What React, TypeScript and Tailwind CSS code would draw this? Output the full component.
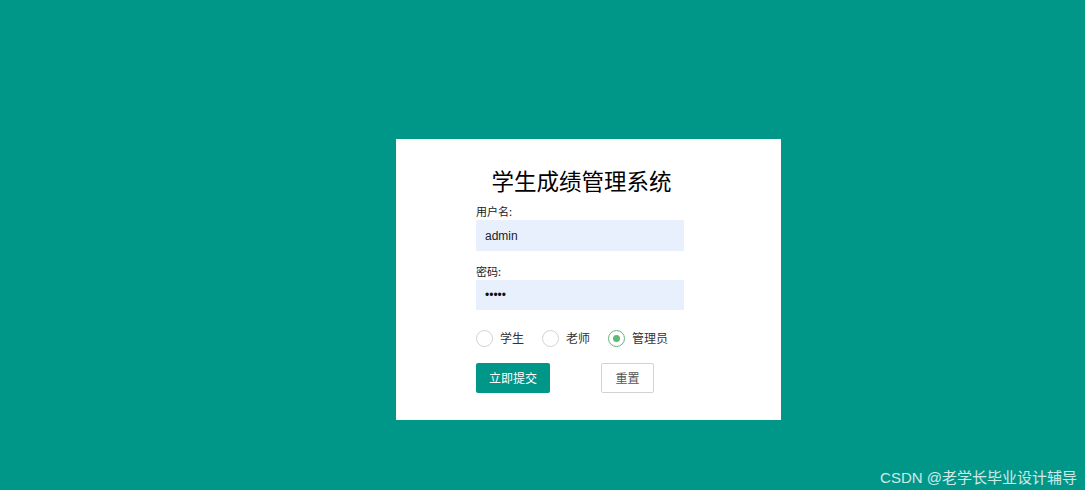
import React from "react";

const font = { fontFamily: '"Noto Sans CJK SC", "Noto Sans", sans-serif' };

function Radio({ label, checked }: { label: string; checked?: boolean }) {
  return (
    <label className="flex items-center">
      <span
        className={`flex h-[17px] w-[17px] items-center justify-center rounded-full border ${
          checked ? "border-[#5fb878]" : "border-[#d2d2d2]"
        }`}
      >
        {checked && <span className="h-[7px] w-[7px] rounded-full bg-[#5fb878]" />}
      </span>
      <span className="ml-[7px] text-[12px] text-[#333]">{label}</span>
    </label>
  );
}

export default function App() {
  return (
    <div className="relative h-[490px] w-full overflow-hidden bg-[#009688]" style={font}>
      <div className="pl-[396px] pt-[139px]">
        <div className="h-[281px] w-[385px] bg-white pl-[80px] pt-[23px]">
          <div className="w-[211px]">
            <h1 className="text-center text-[22.5px] leading-[36px] text-black">学生成绩管理系统</h1>
            <div className="mt-[7px] text-[11px] leading-[13px] text-[#222]">用户名:</div>
            <div className="mt-[2px] flex h-[31px] w-[208px] items-center bg-[#e8f0fe] pl-[9px] text-[12px] text-[#222]" style={{ fontFamily: '"Liberation Sans", Arial, sans-serif' }}>
              admin
            </div>
            <div className="mt-[14px] text-[11px] leading-[13px] text-[#222]">密码:</div>
            <div className="mt-[2px] flex h-[30px] w-[208px] items-center bg-[#e8f0fe] pl-[9px] text-[12px] text-[#111]" style={{ fontFamily: '"Liberation Sans", Arial, sans-serif' }}>
              •••••
            </div>
            <div className="mt-[19px] flex items-center gap-[18px]">
              <Radio label="学生" />
              <Radio label="老师" />
              <Radio label="管理员" checked />
            </div>
            <div className="mt-[16px] flex">
              <button className="h-[30px] w-[74px] rounded-[2px] bg-[#009688] text-[12px] text-white">立即提交</button>
              <button className="ml-[51px] h-[30px] w-[53px] rounded-[2px] border border-[#d2d2d2] bg-white text-[12px] text-[#555]">重置</button>
            </div>
          </div>
        </div>
      </div>
      <div className="absolute bottom-[1px] right-[8px] text-[15px] text-white/80" style={{ fontFamily: '"Liberation Sans", "Noto Sans CJK SC", sans-serif' }}>CSDN @老学长毕业设计辅导</div>
    </div>
  );
}
